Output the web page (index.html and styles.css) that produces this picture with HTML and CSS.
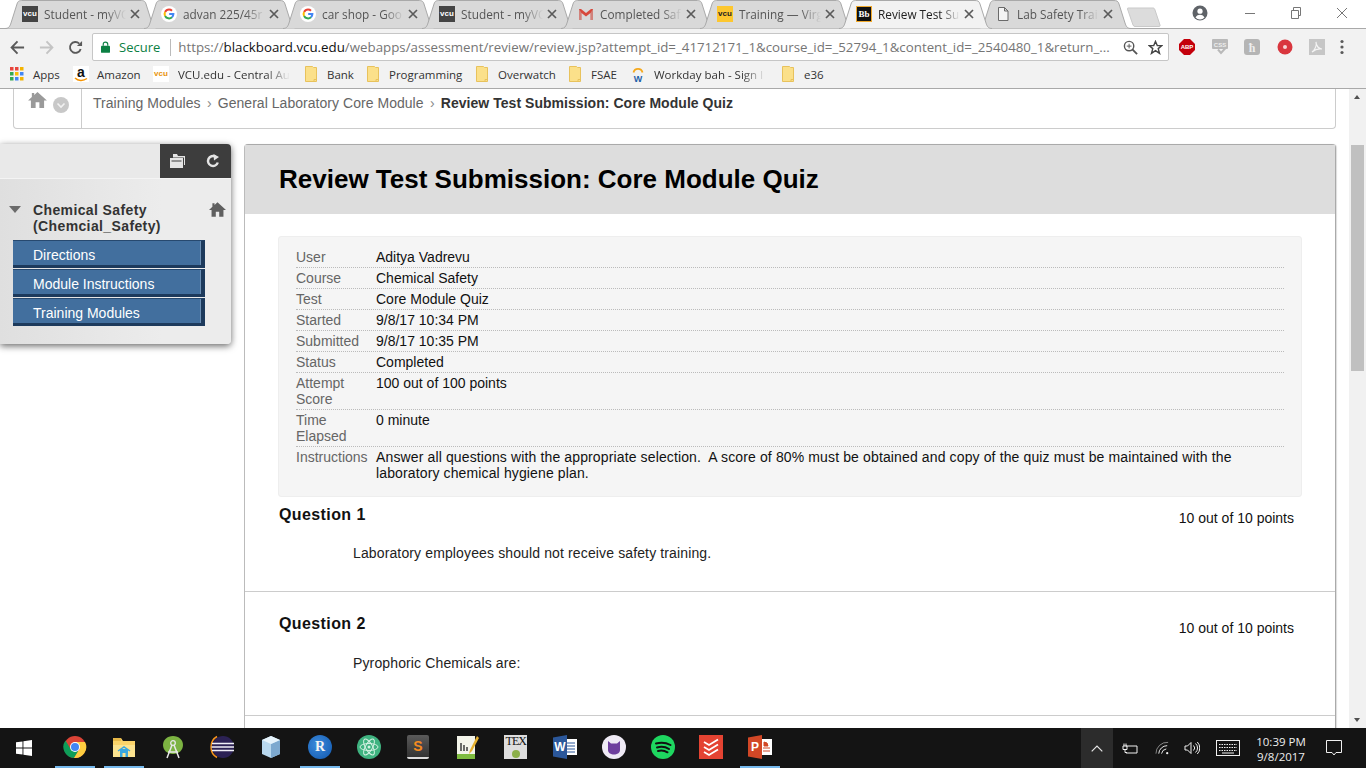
FILE: index.html
```html
<!DOCTYPE html>
<html lang="en">
<head>
<meta charset="utf-8">
<title>Review Test Submission</title>
<link rel="stylesheet" href="styles.css">
</head>
<body>
<svg class="defs" width="0" height="0" aria-hidden="true">
  <symbol id="tabshape" viewBox="0 0 153 29"><path d="M0 28.5C4 28.5 5 26 6 23L12 4C13 1 14 .5 18 .5H135C139 .5 140 1 141 4L147 23C148 26 149 28.5 153 28.5"/></symbol>
  <symbol id="x" viewBox="0 0 10 10"><path d="M1 1L9 9M9 1L1 9" fill="none" stroke="#5a5a5a" stroke-width="1.7"/></symbol>
  <symbol id="g" viewBox="0 0 16 16"><circle cx="8" cy="8" r="8" fill="#fff"/><path d="M8 3.6a4.4 4.4 0 0 1 3 1.2" fill="none" stroke="#ea4335" stroke-width="2"/><path d="M4.1 6A4.4 4.4 0 0 1 8 3.6" fill="none" stroke="#ea4335" stroke-width="2"/><path d="M4.1 10A4.4 4.4 0 0 1 4.1 6" fill="none" stroke="#fbbc05" stroke-width="2"/><path d="M11 11.2A4.4 4.4 0 0 1 4.1 10" fill="none" stroke="#34a853" stroke-width="2"/><path d="M8.2 8h4.2a4.4 4.4 0 0 1-1.4 3.2" fill="none" stroke="#4285f4" stroke-width="2"/></symbol>
  <symbol id="folder" viewBox="0 0 14 16"><path d="M1.500 .5h7l1 1h3v14h-11z" fill="#fbe08a" stroke="#e8c25c"/><path d="M10 15.500v-2h2.500" fill="none" stroke="#e8c25c"/></symbol>
</svg>

<header class="chrome">
  <div class="tabstrip">
    <div class="tab"><svg class="tab-bg"><use href="#tabshape"/></svg><span class="fav fav-vcu">vcu</span><span class="tab-title">Student - myVC</span><svg class="tab-x"><use href="#x"/></svg></div>
    <div class="tab"><svg class="tab-bg"><use href="#tabshape"/></svg><svg class="fav"><use href="#g"/></svg><span class="tab-title">advan 225/45r</span><svg class="tab-x"><use href="#x"/></svg></div>
    <div class="tab"><svg class="tab-bg"><use href="#tabshape"/></svg><svg class="fav"><use href="#g"/></svg><span class="tab-title">car shop - Goo</span><svg class="tab-x"><use href="#x"/></svg></div>
    <div class="tab"><svg class="tab-bg"><use href="#tabshape"/></svg><span class="fav fav-vcu">vcu</span><span class="tab-title">Student - myVC</span><svg class="tab-x"><use href="#x"/></svg></div>
    <div class="tab"><svg class="tab-bg"><use href="#tabshape"/></svg><svg class="fav" viewBox="0 0 16 16"><path d="M1 3h2l5 4 5-4h2v11h-2.500V7L8 10.500 3.500 7v7H1z" fill="#d8483b"/><path d="M3.500 7v7H1V3zM12.500 7v7H15V3z" fill="#c9c9c9" opacity=".45"/></svg><span class="tab-title">Completed Saf</span><svg class="tab-x"><use href="#x"/></svg></div>
    <div class="tab"><svg class="tab-bg"><use href="#tabshape"/></svg><span class="fav fav-vcu-y">vcu</span><span class="tab-title">Training — Virg</span><svg class="tab-x"><use href="#x"/></svg></div>
    <div class="tab tab-active"><svg class="tab-bg"><use href="#tabshape"/></svg><span class="fav fav-bb">Bb</span><span class="tab-title">Review Test Su</span><svg class="tab-x"><use href="#x"/></svg></div>
    <div class="tab"><svg class="tab-bg"><use href="#tabshape"/></svg><svg class="fav" viewBox="0 0 16 16"><path d="M3.500 1.500h6l3.500 3.500v9.500h-9.500zM9.500 1.500V5H13" fill="#f4f4f4" stroke="#6a6a6a"/></svg><span class="tab-title">Lab Safety Trai</span><svg class="tab-x"><use href="#x"/></svg></div>
    <svg class="newtab" viewBox="0 0 34 20"><path d="M1 1H26C27 1 27.500 1.500 28 3L33 18C33.300 19 33 19.500 32 19.500H8C7 19.500 6.500 19 6 18L.5 2C.3 1.300 .5 1 1 1z" fill="#dcdcdc" stroke="#c9c9c9"/></svg>
    <div class="winctl">
      <svg class="win-avatar" viewBox="0 0 16 16"><circle cx="8" cy="8" r="7.500" fill="#5f6368"/><circle cx="8" cy="6.200" r="2.600" fill="#fff"/><path d="M3.500 12.500c1-2.200 3-2.800 4.500-2.800s3.500.6 4.500 2.800A6 6 0 0 1 8 14.500a6 6 0 0 1-4.500-2z" fill="#fff"/></svg>
      <svg class="win-btn" viewBox="0 0 46 20"><path d="M18 10.500H28" stroke="#777" fill="none"/></svg>
      <svg class="win-btn" viewBox="0 0 46 20"><path d="M18.500 7.500h7v8h-7zM20.500 7.500v-3h7v8h-2" stroke="#777" fill="none"/></svg>
      <svg class="win-btn" viewBox="0 0 46 20"><path d="M18 5L28 15M28 5L18 15" stroke="#777" fill="none"/></svg>
    </div>
  </div>

  <div class="toolbar">
    <svg class="nav-icon" viewBox="0 0 16 16"><path d="M15 8H2M8 1.500L1.700 8L8 14.500" fill="none" stroke="#5a5a5a" stroke-width="2"/></svg>
    <svg class="nav-icon" viewBox="0 0 16 16"><path d="M1 8H14M8 1.500L14.300 8L8 14.500" fill="none" stroke="#c4c4c4" stroke-width="2"/></svg>
    <svg class="nav-icon" viewBox="0 0 16 16"><path d="M13.500 9.500A5.800 5.800 0 1 1 12 3.800" fill="none" stroke="#5a5a5a" stroke-width="2"/><path d="M9.500 6.500H15V1z" fill="#5a5a5a"/></svg>
    <div class="omnibox">
      <svg class="lock" viewBox="0 0 10 13"><path d="M2.500 5V3.500a2.500 2.500 0 0 1 5 0V5" fill="none" stroke="#0b8043" stroke-width="1.300"/><rect y="5" width="10" height="8" rx="1" fill="#0b8043"/></svg>
      <span class="secure">Secure</span>
      <span class="omni-sep"></span>
      <span class="url"><span class="url-g">https://</span><span class="url-d">blackboard.vcu.edu</span><span class="url-g">/webapps/assessment/review/review.jsp?attempt_id=_41712171_1&amp;course_id=_52794_1&amp;content_id=_2540480_1&amp;return_...</span></span>
      <svg class="omni-zoom" viewBox="0 0 16 16"><circle cx="6.500" cy="6.500" r="5" fill="none" stroke="#555" stroke-width="1.500"/><path d="M10 10L15 15" stroke="#555" stroke-width="2"/><path d="M4 6.500H9M6.500 4V9" stroke="#555"/></svg>
      <svg class="omni-star" viewBox="0 0 16 16"><path d="M8 1.500L9.900 6H14.800L10.900 9.200L12.300 14.300L8 11.400L3.700 14.300L5.100 9.200L1.200 6H6.100z" fill="none" stroke="#444" stroke-width="1.500"/></svg>
    </div>
    <div class="exts">
      <svg class="ext" viewBox="0 0 16 16"><path d="M5 0h6l5 5v6l-5 5H5l-5-5V5z" fill="#c4000b"/><text x="8" y="10.300" class="ext-abp">ABP</text></svg>
      <svg class="ext" viewBox="0 0 16 16"><rect width="16" height="10" rx="1" fill="#b9b9b9"/><text x="8" y="8" class="ext-css">CSS</text><path d="M6 10.500L9 14L14 8.500" fill="none" stroke="#b9b9b9" stroke-width="2"/></svg>
      <svg class="ext" viewBox="0 0 16 16"><rect width="16" height="16" rx="3" fill="#b5b5b5"/><text x="8" y="12.500" class="ext-h">ħ</text></svg>
      <svg class="ext" viewBox="0 0 16 16"><circle cx="8" cy="8" r="7.500" fill="#d9363e"/><circle cx="8" cy="8" r="2" fill="#f6d5d5"/></svg>
      <svg class="ext" viewBox="0 0 16 16"><rect width="16" height="16" fill="#c6c6c6"/><path d="M3 13C6 11 8 6 7 3C7 7 10 10 13 10C10 9.500 6 10.500 3 13z" fill="none" stroke="#f4f4f4" stroke-width="1.200"/></svg>
      <svg class="ext-menu" viewBox="0 0 4 16"><circle cx="2" cy="2.500" r="1.600"/><circle cx="2" cy="8" r="1.600"/><circle cx="2" cy="13.500" r="1.600"/></svg>
    </div>
  </div>

  <nav class="bookmarks">
    <div class="bm"><svg class="bm-icon" viewBox="0 0 14 14"><g><rect width="3.500" height="3.500" fill="#e8453c"/><rect x="5" width="3.500" height="3.500" fill="#e8453c"/><rect x="10" width="3.500" height="3.500" fill="#f4b400"/><rect y="5" width="3.500" height="3.500" fill="#34a853"/><rect x="5" y="5" width="3.500" height="3.500" fill="#fbbc05"/><rect x="10" y="5" width="3.500" height="3.500" fill="#4285f4"/><rect y="10" width="3.500" height="3.500" fill="#34a853"/><rect x="5" y="10" width="3.500" height="3.500" fill="#4285f4"/><rect x="10" y="10" width="3.500" height="3.500" fill="#f4b400"/></g></svg><span class="bm-label bm-apps">Apps</span></div>
    <div class="bm"><span class="bm-amazon">a<svg class="amz-smile" viewBox="0 0 14 5"><path d="M1 1C4 4 9 4.300 13 1.500" fill="none" stroke="#f79400" stroke-width="1.500"/></svg></span><span class="bm-label">Amazon</span></div>
    <div class="bm"><span class="bm-vcu">vcu</span><span class="bm-label bm-fade">VCU.edu - Central Au</span></div>
    <div class="bm"><svg class="bm-icon"><use href="#folder"/></svg><span class="bm-label">Bank</span></div>
    <div class="bm"><svg class="bm-icon"><use href="#folder"/></svg><span class="bm-label">Programming</span></div>
    <div class="bm"><svg class="bm-icon"><use href="#folder"/></svg><span class="bm-label">Overwatch</span></div>
    <div class="bm"><svg class="bm-icon"><use href="#folder"/></svg><span class="bm-label">FSAE</span></div>
    <div class="bm"><svg class="bm-icon" viewBox="0 0 14 16"><path d="M2.500 6.500a4.600 4.600 0 0 1 9 0" fill="none" stroke="#f5a81c" stroke-width="1.800"/><text x="7" y="15.500" class="bm-w">W</text></svg><span class="bm-label bm-fade">Workday bah - Sign I</span></div>
    <div class="bm"><svg class="bm-icon"><use href="#folder"/></svg><span class="bm-label">e36</span></div>
  </nav>
</header>

<div class="viewport">
  <main class="page">
    <div class="crumbbar">
      <div class="crumb-home">
        <svg class="crumb-house" viewBox="0 0 20 17"><path d="M10 0L20 9H17V17H12V11H8V17H3V9H0L4 5.400V1H6.500V3.200z" fill="#9a9a9a"/></svg>
        <svg class="crumb-down" viewBox="0 0 16 16"><circle cx="8" cy="8" r="8" fill="#c8c8c8"/><path d="M4.500 6.500L8 10L11.500 6.500" fill="none" stroke="#f2f2f2" stroke-width="1.600"/></svg>
      </div>
      <ol class="crumbs">
        <li>Training Modules</li>
        <li class="crumb-sep">›</li>
        <li>General Laboratory Core Module</li>
        <li class="crumb-sep">›</li>
        <li class="crumb-current">Review Test Submission: Core Module Quiz</li>
      </ol>
    </div>

    <div class="columns">
      <aside class="sidebar">
        <div class="side-top">
          <div class="side-search"></div>
          <div class="side-tools">
            <svg class="side-tool" viewBox="0 0 16 14"><path d="M3 0h4l1 2h7v9h-1V3.500H3z" fill="#e4e4e4"/><path d="M0 4h13v10H0z" fill="#e4e4e4"/><path d="M1.500 7h10" stroke="#3c3c3c"/></svg>
            <svg class="side-tool" viewBox="0 0 14 14"><path d="M11.800 8.500A5 5 0 1 1 9.500 2.700" fill="none" stroke="#e4e4e4" stroke-width="2.400"/><path d="M7.500 0L13 3L8 6.500z" fill="#e4e4e4"/></svg>
          </div>
        </div>
        <div class="side-body">
          <div class="side-course">
            <span class="side-tri"></span>
            <h2 class="side-title">Chemical Safety (Chemcial_Safety)</h2>
            <svg class="side-house" viewBox="0 0 20 17"><path d="M10 0L20 9H17V17H12V11H8V17H3V9H0L4 5.400V1H6.500V3.200z" fill="#5f5f5f"/></svg>
          </div>
          <ul class="side-nav">
            <li>Directions</li>
            <li>Module Instructions</li>
            <li>Training Modules</li>
          </ul>
        </div>
      </aside>

      <section class="content">
        <div class="content-head"><h1>Review Test Submission: Core Module Quiz</h1></div>
        <div class="content-inner">
          <dl class="meta">
            <div class="meta-row"><dt>User</dt><dd>Aditya Vadrevu</dd></div>
            <div class="meta-row"><dt>Course</dt><dd>Chemical Safety</dd></div>
            <div class="meta-row"><dt>Test</dt><dd>Core Module Quiz</dd></div>
            <div class="meta-row"><dt>Started</dt><dd>9/8/17 10:34 PM</dd></div>
            <div class="meta-row"><dt>Submitted</dt><dd>9/8/17 10:35 PM</dd></div>
            <div class="meta-row"><dt>Status</dt><dd>Completed</dd></div>
            <div class="meta-row"><dt>Attempt Score</dt><dd>100 out of 100 points</dd></div>
            <div class="meta-row"><dt>Time Elapsed</dt><dd>0 minute</dd></div>
            <div class="meta-row meta-last"><dt>Instructions</dt><dd class="meta-long">Answer all questions with the appropriate selection.&nbsp; A score of 80% must be obtained and copy of the quiz must be maintained with the laboratory chemical hygiene plan.</dd></div>
          </dl>
        </div>
        <article class="question q1">
          <div class="q-head"><h3>Question 1</h3><span class="q-points">10 out of 10 points</span></div>
          <p class="q-text">Laboratory employees should not receive safety training.</p>
        </article>
        <article class="question q2">
          <div class="q-head"><h3>Question 2</h3><span class="q-points">10 out of 10 points</span></div>
          <p class="q-text">Pyrophoric Chemicals are:</p>
        </article>
      </section>
    </div>
  </main>
  <div class="scrollbar">
    <span class="sb-up"></span>
    <span class="sb-thumb"></span>
    <span class="sb-down"></span>
  </div>
</div>

<footer class="taskbar">
  <div class="start"><svg class="start-logo" viewBox="0 0 16 16"><path d="M0 2.300L6.500 1.400V7.500H0zM7.400 1.300L16 0V7.500H7.400zM0 8.400H6.500V14.600L0 13.700zM7.400 8.400H16V16L7.400 14.800z" fill="#fff"/></svg></div>
  <div class="tb tb-run"><svg class="tb-icon" viewBox="0 0 24 24"><circle cx="12" cy="12" r="11" fill="#db4437"/><path d="M12 12L1.800 16A11 11 0 0 1 3 5.500z" fill="#db4437"/><path d="M7 13L2.500 5.500A11 11 0 0 0 11 23l4.500-7z" fill="#0f9d58"/><path d="M12 7H22A11 11 0 0 1 11 23l5.500-9z" fill="#ffcd40"/><circle cx="12" cy="12" r="5" fill="#fff"/><circle cx="12" cy="12" r="4" fill="#4285f4"/></svg></div>
  <div class="tb tb-run"><svg class="tb-icon" viewBox="0 0 24 24"><path d="M1 3h8l2 3h12v16H1z" fill="#fbd46a"/><path d="M1 3h8v3H1z" fill="#e8b948"/><path d="M1 10h22v12H1z" fill="#fce38f"/><path d="M8 14h8v8h-2.500v-4h-3v4H8z" fill="#3aa7e0"/><path d="M6 16l6-4 6 4" fill="none" stroke="#3aa7e0" stroke-width="1.500"/></svg></div>
  <div class="tb"><svg class="tb-icon" viewBox="0 0 24 24"><path d="M12 1c6 0 10 4 10 9s-4 9-10 9S2 15 2 10s4-9 10-9z" fill="#7cb342"/><circle cx="12" cy="8" r="2.300" fill="none" stroke="#e8e8e8" stroke-width="1.300"/><path d="M11 10L6 23M13 10L18 23M7 17H17" stroke="#e8e8e8" stroke-width="1.500" fill="none"/></svg></div>
  <div class="tb"><svg class="tb-icon" viewBox="0 0 24 24"><circle cx="13" cy="12" r="11" fill="#2c2255"/><path d="M7 1.500C-1 6-1 18 7 22.500" fill="none" stroke="#f7941e" stroke-width="1.500"/><path d="M2 8.500H24M1.500 12H24.500M2 15.500H24" stroke="#f1f1f8" stroke-width="1.300"/></svg></div>
  <div class="tb"><svg class="tb-icon" viewBox="0 0 24 24"><path d="M12 1L21 5V19L12 23L3 19V5z" fill="#b8d8ee"/><path d="M12 9L21 5V19L12 23z" fill="#7da9cf"/><path d="M12 9L3 5L12 1L21 5z" fill="#e6f3fb"/></svg></div>
  <div class="tb tb-run"><span class="tb-r">R</span></div>
  <div class="tb"><svg class="tb-icon" viewBox="0 0 24 24"><circle cx="12" cy="12" r="12" fill="#3fb380"/><g fill="none" stroke="#d3f1e2"><ellipse cx="12" cy="12" rx="9" ry="3.500" transform="rotate(60 12 12)"/><ellipse cx="12" cy="12" rx="9" ry="3.500" transform="rotate(-60 12 12)"/><ellipse cx="12" cy="12" rx="9" ry="3.500"/></g><circle cx="12" cy="12" r="1.500" fill="#d3f1e2"/></svg></div>
  <div class="tb"><span class="tb-sublime">S</span></div>
  <div class="tb"><svg class="tb-icon" viewBox="0 0 24 24"><path d="M2 1H20V24H2z" fill="#f3f4ea"/><path d="M2 19H20V24H2z" fill="#7ebc3f"/><path d="M6 8V16M9 10V16M12 12V16" stroke="#3c3c3c" stroke-width="1.500"/><path d="M22 1L15 15L14 19L17 16L24 3z" fill="#e6b02e"/></svg></div>
  <div class="tb"><span class="tb-tex">TEX<span class="tb-tex-dot"></span></span></div>
  <div class="tb"><svg class="tb-icon" viewBox="0 0 24 24"><path d="M8 4H24V20H8z" fill="#fff"/><path d="M14 8H22M14 11H22M14 14H22M14 17H22" stroke="#2b579a"/><path d="M0 2.500L14 0V24L0 21.500z" fill="#2b579a"/><text x="7" y="16" class="tb-w">W</text></svg></div>
  <div class="tb"><svg class="tb-icon" viewBox="0 0 24 24"><circle cx="12" cy="12" r="12" fill="#efeaf5"/><path d="M6 6L9 8.500H15L18 6V15C18 18 15 19.500 12 19.500S6 18 6 15z" fill="#6e3f9e"/></svg></div>
  <div class="tb"><svg class="tb-icon" viewBox="0 0 24 24"><circle cx="12" cy="12" r="12" fill="#1ed760"/><path d="M5 8.500C10 7 15 7.500 19.500 10M6 12.500C10 11.300 14.500 11.800 18 14M7 16C10 15.200 13.500 15.500 16.500 17.300" fill="none" stroke="#111" stroke-width="2" stroke-linecap="round"/></svg></div>
  <div class="tb"><svg class="tb-icon" viewBox="0 0 24 24"><rect width="24" height="24" fill="#e44332"/><path d="M5 7L10 10L19 4.500M5 12L10 15L19 9.500M5 17L10 20L19 14.500" fill="none" stroke="#fff" stroke-width="1.800"/></svg></div>
  <div class="tb tb-run"><svg class="tb-icon" viewBox="0 0 24 24"><path d="M8 4H24V20H8z" fill="#fff"/><path d="M16 7a4 4 0 0 1 4 4h-4zM15 13H22M15 16H22" stroke="#d24726" fill="#d24726"/><path d="M0 2.500L14 0V24L0 21.500z" fill="#d24726"/><text x="7" y="16" class="tb-w">P</text></svg></div>
  <div class="tray">
    <div class="tray-up"><svg class="tray-chev" viewBox="0 0 12 7"><path d="M.7 6.300L6 1L11.300 6.300" fill="none" stroke="#e8e8e8" stroke-width="1.200"/></svg></div>
    <svg class="tray-icon tray-batt" viewBox="0 0 16 12"><path d="M4 3.500H15V10.500H4" fill="none" stroke="#f0f0f0"/><path d="M1 3.500H5V7H1zM2 1V3.500M4 1V3.500M3 7V10H5" fill="none" stroke="#f0f0f0"/></svg>
    <svg class="tray-icon tray-wifi" viewBox="0 0 16 14"><g fill="none" stroke="#f0f0f0"><path d="M1 13A12 12 0 0 1 14 1" opacity=".55"/><path d="M4 13A9 9 0 0 1 13 4.500"/><path d="M7 13A6 6 0 0 1 12 8"/></g><circle cx="13" cy="12.500" r="1.200" fill="#f0f0f0"/></svg>
    <svg class="tray-icon tray-vol" viewBox="0 0 16 14"><path d="M1 5H3.500L7 1.500V12.500L3.500 9H1z" fill="none" stroke="#f0f0f0"/><path d="M9.500 4.500A3.500 3.500 0 0 1 9.500 9.500M11.500 2.500A6 6 0 0 1 11.500 11.500M13.300 1A8.500 8.500 0 0 1 13.300 13" fill="none" stroke="#f0f0f0"/></svg>
    <svg class="tray-icon tray-kbd" viewBox="0 0 24 16"><rect x=".5" y=".5" width="23" height="15" fill="none" stroke="#f0f0f0"/><path d="M3 4.500H21M3 7.500H21M3 10.500H21" stroke="#f0f0f0" stroke-dasharray="1.500 1"/><path d="M6 13H18" stroke="#f0f0f0"/></svg>
    <div class="clock"><span>10:39 PM</span><span>9/8/2017</span></div>
    <svg class="tray-icon tray-notif" viewBox="0 0 16 16"><path d="M.5.500H15.500V12.500H10L8 15L6 12.500H.5z" fill="none" stroke="#f0f0f0"/></svg>
  </div>
</footer>
</body>
</html>
```

FILE: styles.css
```css
* { box-sizing: border-box; }
html, body { margin: 0; height: 768px; width: 1366px; overflow: hidden; }
body { display: flex; flex-direction: column; background: #fff; font-family: "Liberation Sans", Arial, sans-serif; color: #000; }
.defs { position: absolute; }
h1, h2, h3, p, ul, ol, dl, dd { margin: 0; padding: 0; }
ul, ol { list-style: none; }

.chrome { flex: none; font-family: "Open Sans", "Noto Sans", sans-serif; }

/* Tab strip */
.tabstrip { height: 29px; display: flex; padding-left: 5px; background: linear-gradient(#fff 28px, #a9a9a9 28px); position: relative; }
.tab { width: 153px; height: 29px; margin-right: -14px; position: relative; display: flex; align-items: center; padding: 0 10px 1px 17px; flex: none; font-size: 11.800px; color: #555; }
.tab-bg { position: absolute; inset: 0; width: 153px; height: 29px; fill: #d9d9d9; stroke: #a9a9a9; }
.tab-active { z-index: 2; color: #222; }
.tab-active .tab-bg { fill: #f2f2f2; }
.fav { position: relative; width: 16px; height: 16px; flex: none; display: block; }
.fav-vcu { background: #444; color: #fff; font: bold 8px/16px "Liberation Sans", sans-serif; text-align: center; }
.fav-vcu-y { background: #fdc72f; color: #222; font: bold 8px/16px "Liberation Sans", sans-serif; text-align: center; }
.fav-bb { background: #111; border: 1px solid #f0a92c; color: #fff; font: bold 9px/14px "Liberation Serif", serif; text-align: center; }
.tab-title { position: relative; width: 86px; margin-left: 6px; white-space: nowrap; -webkit-mask-image: linear-gradient(90deg, #000 62px, transparent 82px); mask-image: linear-gradient(90deg, #000 62px, transparent 82px); }
.tab-x { position: relative; width: 10px; height: 10px; flex: none; margin-left: 0; }
.newtab { width: 34px; height: 20px; margin: 7px 0 0 10px; flex: none; }
.winctl { display: flex; align-items: flex-start; flex: 1; }
.win-avatar { width: 16px; height: 16px; margin: 5px 19px 0 31px; flex: none; }
.win-btn { width: 46px; height: 20px; margin-top: 3px; flex: none; }

/* Toolbar */
.toolbar { height: 34px; padding-top: 2px; background: #f2f2f2; display: flex; align-items: center; padding-left: 10px; }
.nav-icon { width: 15px; height: 15px; margin-right: 14px; flex: none; }
.omnibox { width: 1077px; height: 28px; margin-left: -5px; background: #fff; border: 1px solid #c6c6c6; border-radius: 2px; display: flex; align-items: center; padding-left: 8px; flex: none; font-size: 13.300px; }
.lock { width: 9px; height: 12px; flex: none; }
.secure { color: #0b8043; margin-left: 9px; font-size: 13px; }
.omni-sep { width: 1px; height: 17px; background: #bbb; margin: 0 7px 0 10px; }
.url { flex: none; width: 934px; white-space: nowrap; color: #777; }
.url-g { color: #757575; }
.url-d { color: #111; }
.omni-zoom { width: 15px; height: 15px; margin-left: 11px; flex: none; }
.omni-star { width: 15px; height: 15px; margin-left: 10px; flex: none; }
.exts { display: flex; align-items: center; margin-left: 10px; }
.ext { width: 16px; height: 16px; margin-right: 16.500px; flex: none; }
.ext-abp { font: bold 6px "Liberation Sans", sans-serif; fill: #fff; text-anchor: middle; }
.ext-css { font: bold 6px "Liberation Sans", sans-serif; fill: #eee; text-anchor: middle; }
.ext-h { font: bold 12px "Liberation Serif", serif; fill: #eee; text-anchor: middle; }
.ext-menu { width: 4px; height: 16px; fill: #5a5a5a; margin-left: -2px; }

/* Bookmarks */
.bookmarks { height: 26px; padding: 0 0 3px 10px; background: #f2f2f2; border-bottom: 1px solid #a9a9a9; display: grid; grid-template-columns: 64px 80px 150px 62px 109px 93px 63px 150px 60px; align-items: center; font-size: 11.500px; color: #333; }
.bm { display: flex; align-items: center; min-width: 0; }
.bm-icon { width: 14px; height: 16px; flex: none; }
.bm-label { white-space: nowrap; color: #333; }
.bm .bm-icon + .bm-label { margin-left: 9px; }
.bm .bm-apps { margin-left: 11px; }
.bm-fade { width: 114px; -webkit-mask-image: linear-gradient(90deg, #000 88px, transparent 112px); mask-image: linear-gradient(90deg, #000 88px, transparent 112px); }
.bm-amazon { position: relative; width: 16px; height: 16px; background: #fff; margin-left: -1px; font: bold 14px/12px "Liberation Sans", sans-serif; color: #111; text-align: center; flex: none; }
.amz-smile { position: absolute; left: 1px; bottom: 0; width: 14px; height: 5px; }
.bm-amazon + .bm-label { margin-left: 8px; }
.bm-vcu { width: 16px; height: 16px; background: #fff; color: #e8930c; font: bold 8px/16px "Liberation Sans", sans-serif; text-align: center; flex: none; margin-left: -1px; }
.bm-vcu + .bm-label { margin-left: 9px; }
.bm-w { font: bold 9px "Liberation Sans", sans-serif; fill: #1d5fa8; text-anchor: middle; }

/* Page */
.viewport { flex: 1; min-height: 0; display: flex; }
.page { flex: 1; min-width: 0; overflow: hidden; padding: 0 13px 0 0; background: #fff; font-size: 14px; }
.scrollbar { width: 17px; background: #f1f1f1; flex: none; position: relative; }
.sb-up, .sb-down { position: absolute; left: 5px; width: 0; height: 0; border-left: 3.500px solid transparent; border-right: 3.500px solid transparent; }
.sb-up { top: 6px; border-bottom: 4px solid #505050; }
.sb-down { bottom: 6px; border-top: 4px solid #505050; }
.sb-thumb { position: absolute; left: 2px; width: 13px; top: 56px; height: 226px; background: #c0c0c0; }

.crumbbar { height: 40px; margin-left: 13px; border: 1px solid #ccc; border-top: 0; border-radius: 0 0 4px 4px; display: flex; }
.crumb-home { width: 68px; border-right: 1px solid #ccc; display: flex; align-items: flex-start; padding: 3px 0 0 14px; }
.crumb-house { width: 19px; height: 16px; flex: none; }
.crumb-down { width: 16px; height: 16px; margin: 5px 0 0 6px; flex: none; }
.crumbs { display: flex; padding: 6px 0 0 11px; color: #666; line-height: 16px; letter-spacing: .04px; }
.crumb-sep { margin: 0 6px 0 6.500px; color: #888; }
.crumb-current { font-weight: bold; color: #333; }

.columns { display: flex; margin-top: 15px; gap: 13px; align-items: flex-start; }

/* Sidebar */
.sidebar { width: 231px; flex: none; border-radius: 0 4px 4px 0; box-shadow: 0 2px 7px rgba(0,0,0,.6); background: #e8e8e8; }
.side-top { height: 35px; display: flex; border-bottom: 1px solid #f4f4f4; }
.side-search { flex: 1; background: #e9e9e9; }
.side-tools { width: 71px; background: #3d3d3d; border-radius: 0 4px 0 0; display: flex; align-items: center; justify-content: space-between; padding: 0 10px; }
.side-tool { width: 16px; height: 14px; }
.side-body { height: 165px; padding: 23px 0 0 13px; background: linear-gradient(90deg, #dfdfdf, #ececec 70%); border-radius: 0 0 4px 0; }
.side-course { position: relative; padding-left: 20px; width: 210px; margin-bottom: 6px; }
.side-tri { position: absolute; left: -4px; top: 4px; width: 0; height: 0; border-left: 6px solid transparent; border-right: 6px solid transparent; border-top: 7px solid #6b6b6b; }
.side-title { font-size: 14px; line-height: 16px; font-weight: bold; color: #333; width: 160px; letter-spacing: .38px; }
.side-house { position: absolute; right: -3px; top: 0; width: 17px; height: 15px; }
.side-nav { width: 192px; }
.side-nav li { height: 28px; margin-bottom: 1px; padding-left: 20px; line-height: 29px; font-size: 14px; color: #fff; background: #426f9e; border-top: 1px solid #27496f; border-bottom: 3px solid #1d3a5c; border-right: 4px solid #1d3a5c; box-shadow: inset -1px 0 #6d90b5; }

/* Content */
.content { flex: 1; min-width: 0; height: 600px; border: 1px solid #bbb; border-top-color: #aaa; border-right-color: #aaa; border-radius: 4px 4px 0 0; box-shadow: 1px 0 1px #ddd; background: #fff; }
.content-head { height: 69px; background: #ddd; padding: 0 0 2px 34px; display: flex; align-items: center; }
.content-head h1 { font-size: 26px; font-weight: bold; color: #000; line-height: 30px; }
.content-inner { padding: 22px 33px 0 33px; }
.meta { background: #f5f5f5; border: 1px solid #eee; border-radius: 3px; padding: 10px 17px 15px; height: 261px; }
.meta-row { display: flex; border-bottom: 1px dotted #bbb; padding: 2px 0 2px; line-height: 16px; }
.meta-last { border-bottom: 0; }
.meta-row dt { width: 80px; flex: none; color: #666; padding-right: 18px; }
.meta-row dd { color: #111; flex: 1; }
.meta-row .meta-long { letter-spacing: .13px; }

.question { border-bottom: 1px solid #ccc; padding: 0 41px 0 34px; }
.q1 { height: 95px; }
.q2 { height: 124px; }
.q-head { display: flex; justify-content: space-between; padding-top: 9px; }
.q2 .q-head { padding-top: 23px; }
.q-head h3 { font-size: 16px; line-height: 18px; font-weight: bold; color: #111; letter-spacing: .4px; }
.q-points { font-size: 14px; line-height: 16px; color: #111; padding-top: 4px; }
.q2 .q-points { padding-top: 5px; }
.q-text { margin: 19px 0 0 74px; line-height: 16px; color: #222; letter-spacing: .13px; }

/* Taskbar */
.taskbar { flex: none; height: 40px; background: #141414; display: flex; align-items: stretch; position: relative; }
.start { width: 51px; padding: 12px 0 0 16px; flex: none; }
.start-logo { width: 16px; height: 16px; display: block; }
.tb { width: 48.930px; flex: none; display: flex; align-items: center; justify-content: center; padding-bottom: 2px; }
.tb-run { background: linear-gradient(90deg, transparent 4px, #76b9ed 4px, #76b9ed 44px, transparent 44px) bottom / 100% 2px no-repeat; }
.tb-icon { width: 24px; height: 24px; flex: none; }
.tb-r { width: 24px; height: 24px; border-radius: 50%; background: radial-gradient(circle at 40% 40%, #3d8bdc, #0f56ad); color: #f4f4f4; font: bold 14px/24px "Liberation Serif", serif; text-align: center; }
.tb-sublime { width: 22px; height: 24px; background: linear-gradient(#5a5a5a, #333); border-bottom: 2px solid #ddd; border-radius: 2px; color: #f48b1f; font: bold 14px/22px "Liberation Sans", sans-serif; text-align: center; }
.tb-tex { position: relative; width: 23px; height: 24px; background: #dedede; color: #111; font: 12px/13px "Liberation Serif", serif; letter-spacing: -1px; text-align: center; }
.tb-tex-dot { position: absolute; left: 8px; bottom: 1px; width: 8px; height: 8px; border-radius: 50%; background: #8cb04a; }
.tb-w { font: bold 12px "Liberation Sans", sans-serif; fill: #fff; text-anchor: middle; }
.tray { margin-left: auto; display: flex; align-items: center; color: #eee; position: relative; }
.tray-up { width: 32px; height: 40px; background: #2c2c2c; display: flex; align-items: center; justify-content: center; }
.tray-chev { width: 12px; height: 7px; }
.tray-icon { flex: none; }
.tray-batt { width: 16px; height: 13px; margin-left: 9px; }
.tray-wifi { width: 15px; height: 14px; margin-left: 17px; }
.tray-vol { width: 16px; height: 14px; margin-left: 14px; }
.tray-kbd { width: 24px; height: 16px; margin-left: 16px; }
.clock { width: 76px; margin-left: 3px; padding-top: 1px; display: flex; flex-direction: column; align-items: center; font: 11.500px/15px "Open Sans", "Noto Sans", sans-serif; color: #eee; }
.tray-notif { width: 16px; height: 16px; margin: 0 24px 0 7px; }
```
